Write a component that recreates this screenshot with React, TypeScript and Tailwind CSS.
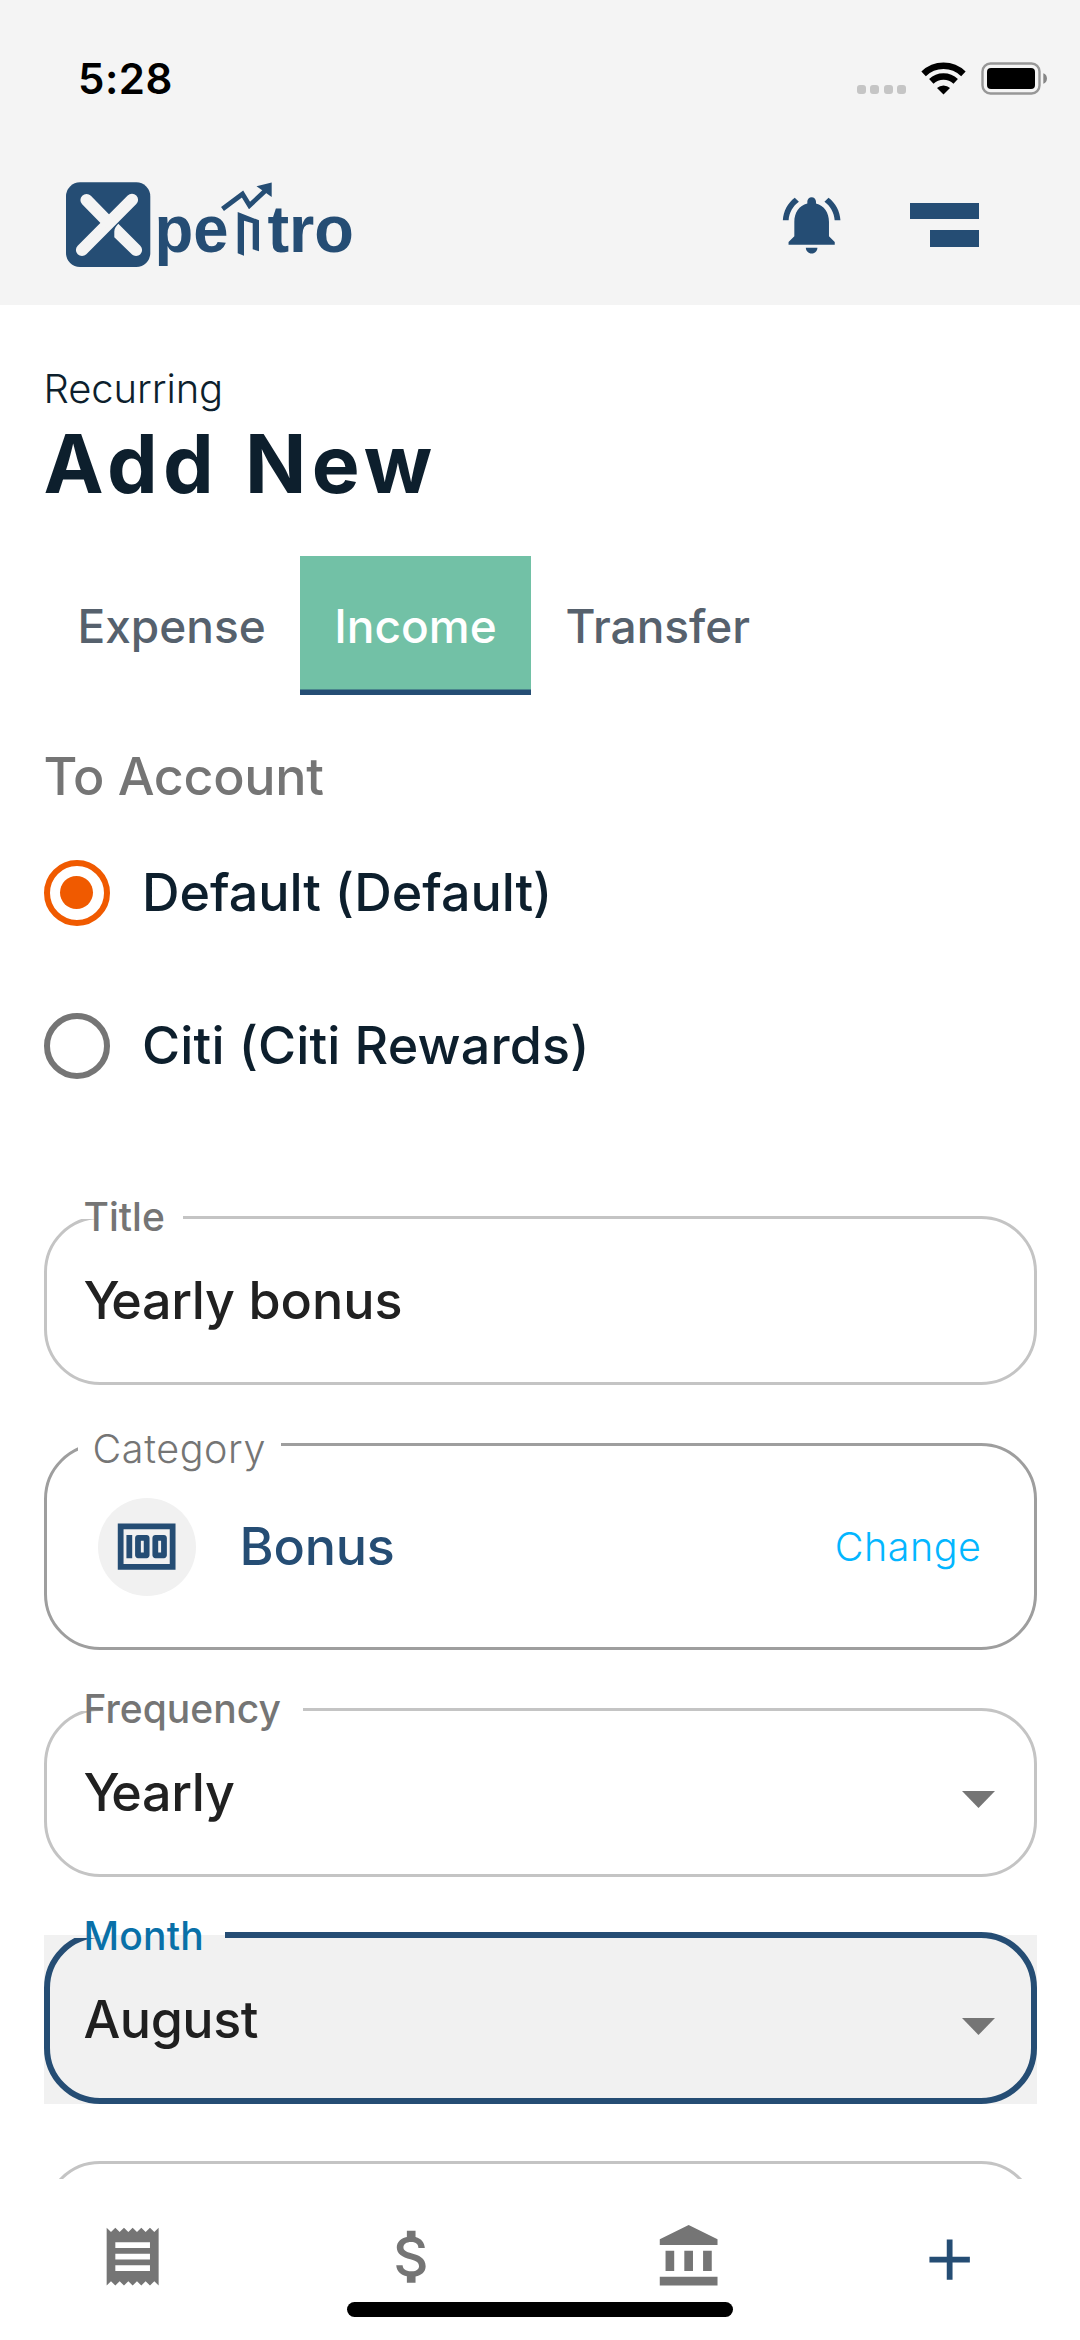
import React from 'react';

const NAVY = '#254d74';

function Logo() {
  return (
    <svg width="292" height="96" viewBox="0 0 292 96" fill={NAVY}>
      <rect x="0" y="6.3" width="84.3" height="84.7" rx="14" />
      <g stroke="#f4f4f4" strokeWidth="12.2" strokeLinecap="round">
        <path d="M66 23.8 L16 74" />
        <path d="M20.5 24 L42 46" />
      </g>
      <path
        d="M52.3 47.8 C50.4 50 48.3 52.4 48.3 55.5 V61.3 L65.8 78.3 A6 6 0 0 0 74.3 69.7 Z"
        fill="#f4f4f4"
      />
      <g fontFamily="'Liberation Sans', Arial, sans-serif" fontWeight="700" fontSize="66">
        <text x="88.6" y="76.3" textLength="74" lengthAdjust="spacingAndGlyphs">pe</text>
        <text x="201.5" y="76.3" textLength="86.5" lengthAdjust="spacingAndGlyphs">tro</text>
      </g>
      <path d="M171.7 36 L193 44.3 V75.3 L186.7 73.3 V47.3 L178 44.7 V79.7 L171.7 77.3 Z" />
      <path d="M156.5 33 L176.5 18 L183.5 29.5 L199 15" fill="none" stroke={NAVY} strokeWidth="4.8" />
      <path d="M190.5 10.3 L205.7 6.6 V21 Z" />
    </svg>
  );
}

function Icon({ d, className = '' }: { d: string; className?: string }) {
  return (
    <svg className={`size-[69.3px] shrink-0 ${className}`} viewBox="0 0 24 24" fill="currentColor">
      <path fillRule="evenodd" d={d} />
    </svg>
  );
}

const BELL =
  'M7.58 4.08 6.15 2.65C3.75 4.48 2.17 7.3 2.03 10.5h2c.15-2.65 1.51-4.97 3.55-6.42zm12.39 6.42h2c-.15-3.2-1.73-6.02-4.12-7.85l-1.42 1.43c2.02 1.45 3.39 3.77 3.54 6.42zM18 11c0-3.07-1.64-5.64-4.5-6.32V4c0-.83-.67-1.5-1.5-1.5s-1.5.67-1.5 1.5v.68C7.63 5.36 6 7.92 6 11v5l-2 2v1h16v-1l-2-2v-5zm-6 11c.14 0 .27-.01.4-.04.65-.14 1.18-.58 1.44-1.18.1-.24.15-.5.15-.78h-4c.01 1.1.9 2 2.01 2z';
const RECEIPT =
  'M18 17H6v-2h12v2zm0-4H6v-2h12v2zm0-4H6V7h12v2zM3 22l1.5-1.5L6 22l1.5-1.5L9 22l1.5-1.5L12 22l1.5-1.5L15 22l1.5-1.5L18 22l1.5-1.5L21 22V2l-1.5 1.5L18 2l-1.5 1.5L15 2l-1.5 1.5L12 2l-1.5 1.5L9 2 7.5 3.5 6 2 4.5 3.5 3 2v20z';
const DOLLAR =
  'M11.8 10.9c-2.27-.59-3-1.2-3-2.15 0-1.09 1.01-1.85 2.7-1.85 1.78 0 2.44.85 2.5 2.1h2.21c-.07-1.72-1.12-3.3-3.21-3.81V3h-3v2.16c-1.94.42-3.5 1.68-3.5 3.61 0 2.31 1.91 3.46 4.7 4.13 2.5.6 3 1.48 3 2.41 0 .69-.49 1.79-2.7 1.79-2.06 0-2.87-.92-2.98-2.1h-2.2c.12 2.19 1.76 3.42 3.68 3.83V21h3v-2.15c1.95-.37 3.5-1.5 3.5-3.55 0-2.84-2.43-3.81-4.7-4.4z';
const BANK = 'M4 10h3v7H4zm6.5 0h3v7h-3zM2 19h20v3H2zm15-9h3v7h-3zm-5-9L2 6v2h20V6z';
const PLUS = 'M19 13h-6v6h-2v-6H5v-2h6V5h2v6h6v2z';
const MONEY =
  'M5 8h2v8H5zm7 0H9c-.55 0-1 .45-1 1v6c0 .55.45 1 1 1h3c.55 0 1-.45 1-1V9c0-.55-.45-1-1-1zm-1 6h-1v-4h1v4zm7-6h-3c-.55 0-1 .45-1 1v6c0 .55.45 1 1 1h3c.55 0 1-.45 1-1V9c0-.55-.45-1-1-1zm-1 6h-1v-4h1v4zM2 4v16h20V4H2zm2 14V6h16v12H4z';

function StatusBar() {
  return (
    <div className="flex h-[157px] items-start justify-between pl-[78px] pr-[32px] pt-[53px]">
      <div className="text-[42px] font-semibold leading-[52px] tracking-[0.5px] text-black">5:28</div>
      <div className="flex items-start pt-[9px]">
        <div className="flex gap-[4.5px] pt-[23px]">
          {[0, 1, 2, 3].map((i) => (
            <div key={i} className="size-[9px] rounded-[3px] bg-[#c5c5c5]" />
          ))}
        </div>
        <svg className="ml-[15px]" width="45" height="33" viewBox="0 0 45 33">
          <g fill="none" stroke="#000" strokeWidth="6.4">
            <path d="M2.6 11.9 A28.5 28.5 0 0 1 42.4 11.9" />
            <path d="M10.3 19.4 A17.7 17.7 0 0 1 34.7 19.4" />
          </g>
          <path d="M22.5 32.5 L16 26 A9.4 9.4 0 0 1 29 26 Z" />
        </svg>
        <svg className="ml-[15px]" width="67" height="33" viewBox="0 0 67 33">
          <rect x="1.5" y="1.5" width="57" height="30" rx="8" fill="none" stroke="#979797" strokeWidth="2.4" />
          <rect x="6" y="6" width="48" height="21" rx="4" />
          <path d="M62.3 11.2 C67.2 12.8 67.2 20.2 62.3 21.8 Z" fill="#868686" />
        </svg>
      </div>
    </div>
  );
}

function Radio({ label, checked = false }: { label: string; checked?: boolean }) {
  return (
    <label className="flex h-[66px] items-center gap-[32.5px]">
      <span
        className={
          checked
            ? 'flex size-[66px] items-center justify-center rounded-full border-[6.5px] border-[#f05a00]'
            : 'flex size-[66px] items-center justify-center rounded-full border-[6.5px] border-[#757575]'
        }
      >
        {checked && <span className="size-[33px] rounded-full bg-[#f05a00]" />}
      </span>
      <span
        className={
          checked
            ? 'text-[52px] font-medium leading-[66px] tracking-[-0.05px] text-[#0d1f2d]'
            : 'text-[52px] font-medium leading-[66px] tracking-[0.15px] text-[#0d1f2d]'
        }
      >
        {label}
      </span>
    </label>
  );
}

function Arrow() {
  return (
    <svg width="33" height="17" viewBox="0 0 33 17" fill="#757575">
      <path d="M0 0H33L16.5 17Z" />
    </svg>
  );
}

function Field({
  label,
  gap,
  select = false,
  children,
}: {
  label: string;
  gap: string;
  select?: boolean;
  children: React.ReactNode;
}) {
  return (
    <div className="relative flex h-[169px] items-center justify-between rounded-[56px] border-[3px] border-[#c4c4c4] pl-[37px] pr-[39px] text-[52px] font-medium text-[#212121]">
      <div className={`absolute -top-[3px] left-[20px] h-[3px] bg-white ${gap}`} />
      <div className="absolute -top-[26px] left-[37px] text-[39px] leading-[48px] text-[#757575]">{label}</div>
      <div className="leading-[60px]">{children}</div>
      {select && (
        <div className="pt-[13px]">
          <Arrow />
        </div>
      )}
    </div>
  );
}

const KernedYearly = () => (
  <>
    <span className="tracking-[-8.5px]">Y</span>
    <span className="tracking-[-0.3px]">early</span>
  </>
);

export default function App() {
  return (
    <div className="flex h-[2340px] w-[1080px] flex-col overflow-hidden bg-white font-['Inter',sans-serif]">
      <header className="h-[305px] shrink-0 bg-[#f4f4f4]">
        <StatusBar />
        <div className="flex items-start justify-between pl-[66px] pr-[101px] pt-[19px]">
          <Logo />
          <div className="flex items-start pt-[14px] text-[#254d74]">
            <Icon d={BELL} />
            <div className="ml-[63.5px] flex flex-col items-end gap-[11px] pt-[12.5px]">
              <div className="h-[16.5px] w-[69px] bg-[#254d74]" />
              <div className="h-[16.5px] w-[49px] bg-[#254d74]" />
            </div>
          </div>
        </div>
      </header>

      <main className="flex h-[1874px] shrink-0 flex-col overflow-hidden px-[43.5px]">
        <div className="mt-[60px] shrink-0 text-[40px] font-light leading-[48px] tracking-[-0.1px] text-[#0d1f2d]">
          Recurring
        </div>
        <h1 className="mt-[3px] shrink-0 text-[80.5px] font-bold leading-[96px] tracking-[5.2px] text-[#0d1f2d] [word-spacing:2px]">
          Add New
        </h1>

        <div className="mt-[44px] flex h-[139px] shrink-0 text-[46px] font-medium text-[#56616d]">
          <div className="flex w-[256.5px] items-center pl-[34px] pt-px">Expense</div>
          <div className="flex w-[231px] items-center justify-center bg-[#72c1a6] pt-px text-white shadow-[inset_0_-5.5px_0_#254d74]">
            Income
          </div>
          <div className="flex items-center pl-[34.5px] pt-px">Transfer</div>
        </div>

        <div className="mt-[52px] shrink-0 text-[52px] font-medium leading-[60px] tracking-[-0.33px] text-[#757575]">
          To Account
        </div>
        <div className="mt-[52.5px] flex shrink-0 flex-col gap-[87px]">
          <Radio label="Default (Default)" checked />
          <Radio label="Citi (Citi Rewards)" />
        </div>

        <div className="mt-[137.5px] flex shrink-0 flex-col gap-[58px]">
          <Field label="Title" gap="w-[116px]">
            <KernedYearly /> bonus
          </Field>

          <div className="relative flex h-[207px] items-center rounded-[56px] border-[3px] border-[#9e9e9e] pl-[51px] pr-[52px]">
            <div className="absolute -top-[21px] left-[31px] bg-white px-[15px] text-[39.5px] font-light leading-[48px] tracking-[0.6px] text-[#757575]">
              Category
            </div>
            <div className="flex size-[98px] items-center justify-center rounded-full bg-[#f1f1f1] text-[#254d74]">
              <Icon d={MONEY} />
            </div>
            <div className="ml-[44px] flex-1 text-[52px] font-medium leading-[60px] tracking-[-0.2px] text-[#254d74]">
              Bonus
            </div>
            <div className="text-[39.5px] font-light leading-[48px] tracking-[0.5px] text-[#03b6ff]">Change</div>
          </div>

          <Field label="Frequency" gap="w-[236px]" select>
            <KernedYearly />
          </Field>

          <div className="relative flex h-[169px] items-center justify-between bg-[#f1f1f1] pl-[40px] pr-[42px] text-[52px] font-medium text-[#1f1f1f]">
            <div className="absolute inset-x-0 -top-[3px] bottom-0 rounded-[56px] border-[6px] border-[#254d74]" />
            <div className="absolute -top-[3px] left-[25px] h-[3px] w-[156px] bg-white" />
            <div className="absolute left-[25px] top-0 h-[3px] w-[156px] bg-[#f1f1f1]" />
            <div className="absolute -top-[23px] left-[40px] text-[39px] leading-[48px] tracking-[0.2px] text-[#0970a8]">
              Month
            </div>
            <div className="leading-[60px] tracking-[-0.5px]">August</div>
            <div className="pt-[14px]">
              <Arrow />
            </div>
          </div>

          <div className="-mt-px h-[169px] rounded-[56px] border-[3px] border-[#c4c4c4]" />
        </div>
      </main>

      <nav className="flex h-[161px] shrink-0 flex-col items-center bg-white text-[#757575]">
        <div className="flex h-[123px] w-full items-start pl-[98px] pt-[43px]">
          <Icon d={RECEIPT} />
          <Icon d={DOLLAR} className="ml-[210.5px]" />
          <Icon d={BANK} className="ml-[206.5px]" />
          <Icon d={PLUS} className="ml-[192.5px] mt-[3px] text-[#254d74]" />
        </div>
        <div className="h-[15px] w-[386px] rounded-full bg-black" />
      </nav>
    </div>
  );
}
